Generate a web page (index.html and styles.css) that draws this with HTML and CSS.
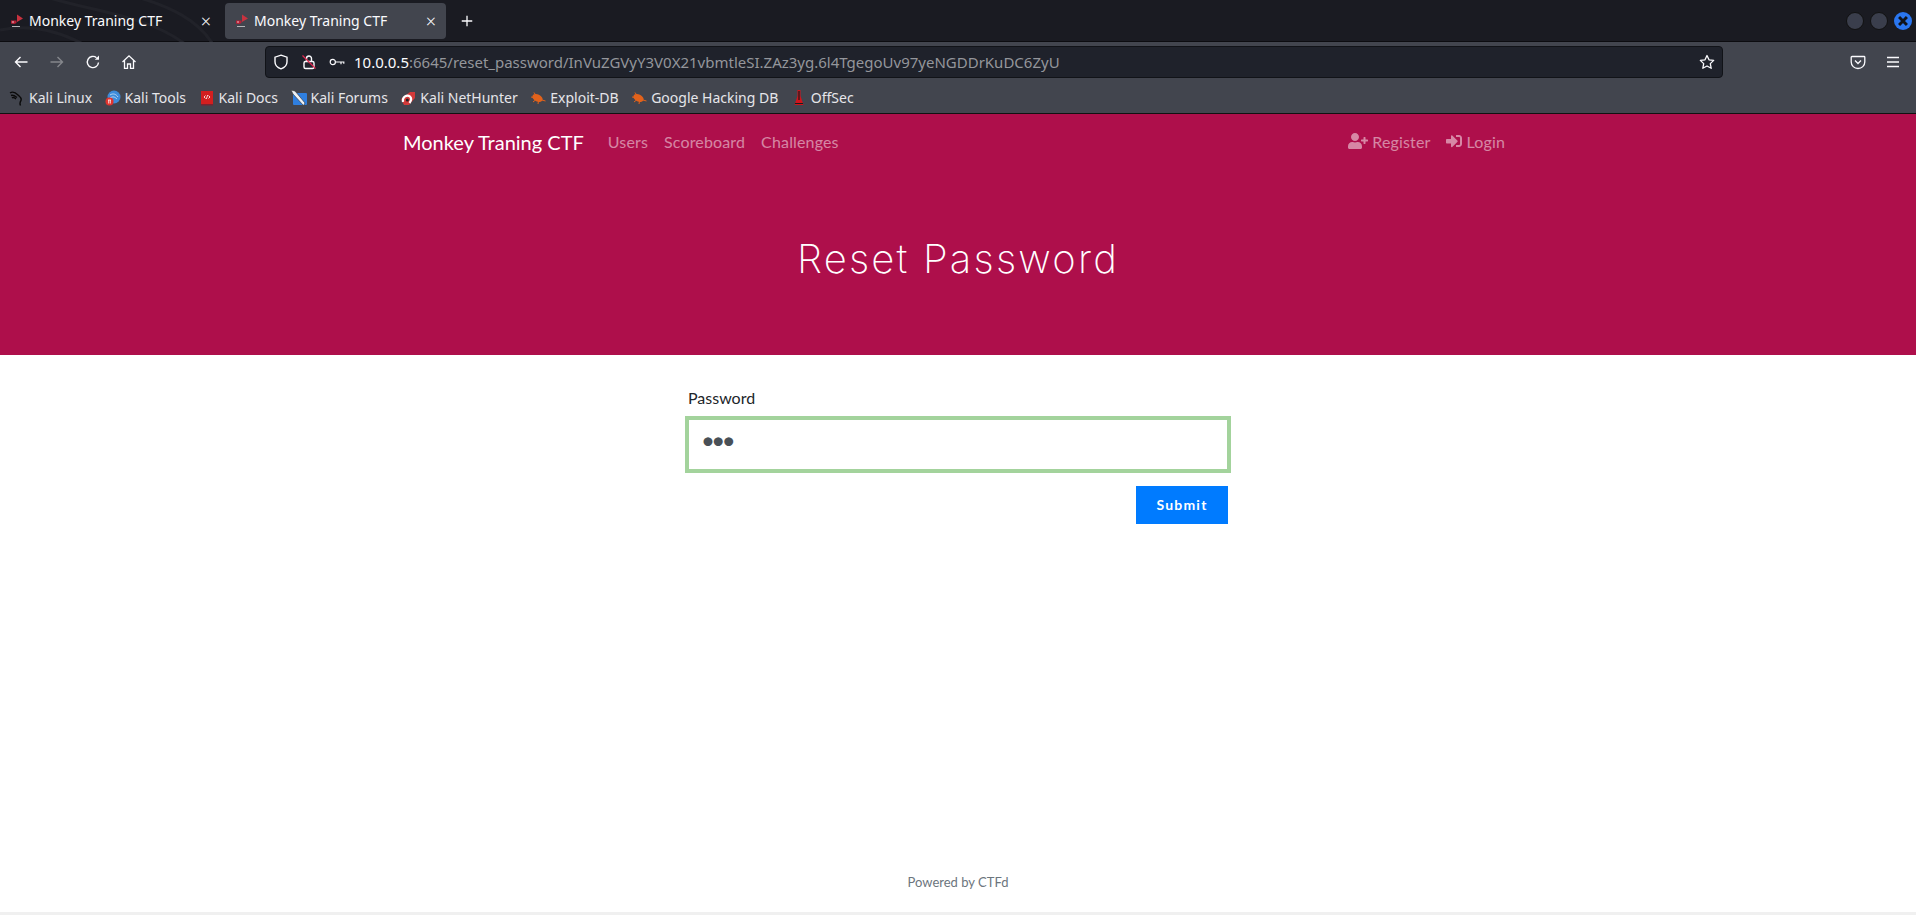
FILE: index.html
```html
<!DOCTYPE html>
<html lang="en">
<head>
    <meta charset="UTF-8">
    <title>Monkey Traning CTF</title>
    <link rel="stylesheet" href="styles.css">
</head>
<body>
    <div class="tabbar">
        <svg class="theme-marks" viewBox="0 0 700 42"><path d="M40 -5C90 12 150 14 190 48M130 -5C170 6 200 20 215 48M0 30C30 24 60 30 90 48" fill="none" stroke="#212229" stroke-width="3"/></svg>
        <div class="tab">
            <svg class="favicon" viewBox="0 0 16 16"><path d="M8 1.500l6 4-6 3.500z" fill="#c8323f"/><path d="M2 7.500h5.500v2.500q-2.500 1.500-5.500 .5z" fill="#b81f35"/><circle cx="4" cy="9" r=".7" fill="#fff"/><path d="M3 13.500h8" stroke="#b5b5b8" stroke-width="1"/></svg>
            <span class="tab-title">Monkey Traning CTF</span>
            <span class="tab-close">&#215;</span>
        </div>
        <div class="tab tab-active">
            <svg class="favicon" viewBox="0 0 16 16"><path d="M8 1.500l6 4-6 3.500z" fill="#c8323f"/><path d="M2 7.500h5.500v2.500q-2.500 1.500-5.500 .5z" fill="#b81f35"/><circle cx="4" cy="9" r=".7" fill="#fff"/><path d="M3 13.500h8" stroke="#b5b5b8" stroke-width="1"/></svg>
            <span class="tab-title">Monkey Traning CTF</span>
            <span class="tab-close">&#215;</span>
        </div>
        <svg class="newtab" viewBox="0 0 16 16"><path d="M8 2v12M2 8h12" stroke="#fbfbfe" stroke-width="1.500"/></svg>
        <div class="win-buttons">
            <span class="win-btn"></span>
            <span class="win-btn"></span>
            <span class="win-btn win-close"><svg viewBox="0 0 16 16"><path d="M4.500 4.500l7 7M11.500 4.500l-7 7" stroke="#10131a" stroke-width="2.600"/></svg></span>
        </div>
    </div>

    <div class="toolbar">
        <svg class="tool" viewBox="0 0 16 16"><path d="M14.500 8H2.500M7.500 3l-5 5 5 5" fill="none" stroke="#fbfbfe" stroke-width="1.400"/></svg>
        <svg class="tool" viewBox="0 0 16 16"><path d="M1.500 8h12M8.500 3l5 5-5 5" fill="none" stroke="#85878c" stroke-width="1.400"/></svg>
        <svg class="tool" viewBox="0 0 16 16"><path d="M13.500 8.500A5.600 5.600 0 1 1 11.500 3.700" fill="none" stroke="#fbfbfe" stroke-width="1.400"/><path d="M14 1.500v4.200H9.800z" fill="#fbfbfe"/></svg>
        <svg class="tool" viewBox="0 0 16 16"><path d="M1.500 8L8 1.800 14.500 8M3.500 6.500V14.300h3V10h3v4.300h3V6.500" fill="none" stroke="#fbfbfe" stroke-width="1.300"/></svg>
        <div class="urlbar">
            <svg class="url-icon" viewBox="0 0 16 16"><path d="M8 1.200l6 2v4.500c0 3.500-2.800 6-6 7.100-3.200-1.100-6-3.600-6-7.100V3.200z" fill="none" stroke="#fbfbfe" stroke-width="1.400"/></svg>
            <svg class="url-icon" viewBox="0 0 16 16"><rect x="3" y="7.500" width="10" height="7" rx="1.500" fill="none" stroke="#fbfbfe" stroke-width="1.400"/><path d="M5.500 7.500V4.500a2.500 2.500 0 0 1 5 0v3" fill="none" stroke="#fbfbfe" stroke-width="1.400"/><path d="M1.500 1.500l13 13" stroke="#e22850" stroke-width="1.300"/></svg>
            <svg class="url-icon url-key" viewBox="0 0 16 16"><circle cx="3.800" cy="8" r="2.600" fill="none" stroke="#fbfbfe" stroke-width="1.200"/><path d="M6.400 8h9M12 8v2.200M14.800 8v1.800" fill="none" stroke="#fbfbfe" stroke-width="1.200"/></svg>
            <span class="url-text"><span class="url-host">10.0.0.5</span>:6645/reset_password/InVuZGVyY3V0X21vbmtleSI.ZAz3yg.6l4TgegoUv97yeNGDDrKuDC6ZyU</span>
            <svg class="url-star" viewBox="0 0 16 16"><path d="M8 1.500l2 4.300 4.700.6-3.400 3.200.9 4.700L8 12l-4.200 2.300.9-4.700L1.300 6.400 6 5.800z" fill="none" stroke="#fbfbfe" stroke-width="1.300" stroke-linejoin="round"/></svg>
        </div>
        <svg class="tool tool-pocket" viewBox="0 0 16 16"><path d="M2 2.500h12a.8.8 0 0 1 .8.800V8a6.800 6.500 0 0 1-13.600 0V3.300A.8.8 0 0 1 2 2.500z" fill="none" stroke="#fbfbfe" stroke-width="1.300"/><path d="M5 6.500l3 3 3-3" fill="none" stroke="#fbfbfe" stroke-width="1.300"/></svg>
        <svg class="tool tool-menu" viewBox="0 0 16 16"><path d="M2 3.500h12M2 8h12M2 12.500h12" stroke="#fbfbfe" stroke-width="1.400"/></svg>
    </div>

    <div class="bookmarks">
        <span class="bm"><svg class="favicon" viewBox="0 0 16 16"><path d="M1 3C4 1 7 3 9 5c2 2 4 3 3 5.500-1 1.500-1.500 3-.5 5M2 5.500C4 4.500 6 6 8 7.500M3 8c1-1 3 0 4 1" fill="none" stroke="#0a0a0a" stroke-width="1.400"/></svg>Kali Linux</span>
        <span class="bm"><svg class="favicon" viewBox="0 0 16 16"><circle cx="9" cy="7" r="6.500" fill="#3d8bd9"/><path d="M5 5c3-2 6-1 8 2M5 8c3-2 5-1 7 1" fill="none" stroke="#cfe4f7" stroke-width=".8"/><circle cx="4.500" cy="11.500" r="4" fill="#e0342e"/><path d="M3 10h3M3.700 10v3.500M5.300 10v3.500" stroke="#fff" stroke-width=".8"/></svg>Kali Tools</span>
        <span class="bm"><svg class="favicon" viewBox="0 0 16 16"><rect x="2" y="1" width="12" height="13" fill="#d21f1f"/><rect x="2" y="14" width="12" height="1.500" fill="#7a2330"/><path d="M6.500 5.500L5 7l1.500 1.500M9.500 5.500L11 7 9.500 8.500M8.700 5l-1.400 4" fill="none" stroke="#fff" stroke-width=".8"/></svg>Kali Docs</span>
        <span class="bm"><svg class="favicon" viewBox="0 0 16 16"><rect x="2" y="3" width="14" height="12" rx="1" fill="#2f7fe0"/><path d="M0 0l4 1 10 12-1.500 2.500L2 4z" fill="#eef2f6" stroke="#2b2b2b" stroke-width=".6"/></svg>Kali Forums</span>
        <span class="bm"><svg class="favicon" viewBox="0 0 16 16"><path d="M1 9L10 2h5v6l-6 7H4z" fill="#d23a3a"/><path d="M3 12C2 7 7 4 10 6.500 12 8.500 11 11 9.500 13" fill="none" stroke="#fff" stroke-width="2.200"/><circle cx="7.300" cy="10" r="1.500" fill="#222"/></svg>Kali NetHunter</span>
        <span class="bm"><svg class="favicon" viewBox="0 0 16 16"><ellipse cx="7.500" cy="8" rx="5.500" ry="3.500" transform="rotate(25 7.500 8)" fill="#e2621b"/><path d="M12 10l3.500 1M4 2.500l2 3M1 7l3 .5M3 12l2.500-2M8 14l.5-3" stroke="#e2621b" stroke-width="1"/></svg>Exploit-DB</span>
        <span class="bm"><svg class="favicon" viewBox="0 0 16 16"><ellipse cx="7.500" cy="8" rx="5.500" ry="3.500" transform="rotate(25 7.500 8)" fill="#e2621b"/><path d="M12 10l3.500 1M4 2.500l2 3M1 7l3 .5M3 12l2.500-2M8 14l.5-3" stroke="#e2621b" stroke-width="1"/></svg>Google Hacking DB</span>
        <span class="bm"><svg class="favicon" viewBox="0 0 16 16"><path d="M6.500 0h3v6l3 9h-9l3-9z" fill="#d0141c"/><path d="M8 1v9M4 13.500h8" stroke="#1c1c1c" stroke-width="1.200"/></svg>OffSec</span>
    </div>

    <div class="page">
        <header class="hero">
            <nav class="navbar">
                <a class="brand">Monkey Traning CTF</a>
                <a class="nav-link">Users</a>
                <a class="nav-link">Scoreboard</a>
                <a class="nav-link">Challenges</a>
                <a class="nav-link nav-right"><svg class="nav-icon nav-icon-wide" viewBox="0 0 640 512"><path d="M624 208h-64v-64c0-8.800-7.200-16-16-16h-32c-8.800 0-16 7.200-16 16v64h-64c-8.800 0-16 7.200-16 16v32c0 8.800 7.200 16 16 16h64v64c0 8.800 7.200 16 16 16h32c8.800 0 16-7.200 16-16v-64h64c8.800 0 16-7.200 16-16v-32c0-8.800-7.200-16-16-16zm-400 48c70.700 0 128-57.300 128-128S294.700 0 224 0 96 57.300 96 128s57.300 128 128 128zm89.600 32h-16.700c-22.200 10.200-46.900 16-72.900 16s-50.600-5.800-72.900-16h-16.700C60.200 288 0 348.200 0 422.400V464c0 26.500 21.500 48 48 48h352c26.500 0 48-21.500 48-48v-41.600c0-74.200-60.200-134.400-134.400-134.400z"/></svg>Register</a>
                <a class="nav-link"><svg class="nav-icon" viewBox="0 0 512 512"><path d="M416 448h-84c-6.600 0-12-5.400-12-12v-40c0-6.600 5.400-12 12-12h84c17.700 0 32-14.300 32-32V160c0-17.700-14.300-32-32-32h-84c-6.600 0-12-5.400-12-12V76c0-6.600 5.400-12 12-12h84c53 0 96 43 96 96v192c0 53-43 96-96 96zm-47-201L201 79c-15-15-41-4.500-41 17v96H24c-13.300 0-24 10.700-24 24v96c0 13.300 10.700 24 24 24h136v96c0 21.500 26 32 41 17l168-168c9.300-9.400 9.300-24.600 0-34z"/></svg>Login</a>
            </nav>
            <h1 class="hero-title">Reset Password</h1>
        </header>

        <main class="content">
            <form class="reset-form">
                <label class="field-label" for="password">Password</label>
                <input class="field-input" id="password" type="password" value="abc">
                <div class="form-actions">
                    <button class="submit-btn" type="button">Submit</button>
                </div>
            </form>
        </main>

        <footer class="footer">Powered by CTFd</footer>
    </div>
</body>
</html>
```

FILE: styles.css
```css
* {
    box-sizing: border-box;
}
body {
    margin: 0;
    height: 915px;
    overflow: hidden;
    display: flex;
    flex-direction: column;
    background-color: #fff;
    font-family: 'Lato', sans-serif;
}
svg {
    display: block;
    flex: none;
}

/* browser chrome */
.tabbar {
    position: relative;
    height: 42px;
    display: flex;
    align-items: center;
    background-color: #1a1b22;
    border-bottom: 1px solid #0c0c10;
    font-family: 'Noto Sans', sans-serif;
    font-size: 14px;
    color: #fbfbfe;
}
.theme-marks {
    position: absolute;
    top: 0;
    left: 0;
    width: 700px;
    height: 42px;
}
.tab {
    position: relative;
    width: 221px;
    height: 36px;
    margin-right: 4px;
    padding: 0 10px 0 9px;
    display: flex;
    align-items: center;
    border-radius: 4px;
}
.tab-active {
    background-color: #42454e;
}
.tab-title {
    margin-left: 4px;
    flex: 1;
}
.tab-close {
    font-size: 18px;
    font-weight: 300;
    line-height: 1;
}
.favicon {
    width: 16px;
    height: 16px;
}
.newtab {
    position: relative;
    width: 14px;
    height: 14px;
    margin-left: 10px;
}
.win-buttons {
    margin-left: auto;
    margin-right: 4px;
    display: flex;
    gap: 6px;
}
.win-btn {
    width: 18px;
    height: 18px;
    border-radius: 50%;
    background-color: #3a3e4c;
    border: 1px solid #111;
}
.win-close {
    background-color: #2a76f0;
    border: 0;
}
.toolbar {
    height: 40px;
    display: flex;
    align-items: center;
    background-color: #42454e;
}
.tool {
    width: 16px;
    height: 16px;
    margin-left: 13px;
    margin-right: 7px;
}
.urlbar {
    width: 1458px;
    height: 32px;
    margin-left: 121px;
    margin-right: 127px;
    padding: 0 7px;
    display: flex;
    align-items: center;
    background-color: #1f222b;
    border: 1px solid #111318;
    border-radius: 4px;
    font-family: 'Noto Sans', sans-serif;
    font-size: 15px;
    color: #94969b;
}
.url-icon {
    width: 16px;
    height: 16px;
    margin-right: 12px;
}
.url-key {
    margin-right: 9px;
}
.url-host {
    color: #fbfbfe;
}
.url-star {
    width: 16px;
    height: 16px;
    margin-left: auto;
}
.tool-pocket {
    margin-left: 0;
    margin-right: 0;
}
.tool-menu {
    margin-left: 19px;
    margin-right: 0;
}
.bookmarks {
    height: 32px;
    padding-left: 9px;
    display: flex;
    align-items: center;
    gap: 12.500px;
    background-color: #42454e;
    border-bottom: 1px solid #111;
    font-family: 'Noto Sans', sans-serif;
    font-size: 14px;
    color: #e6e6ea;
}
.bm {
    display: flex;
    align-items: center;
    gap: 4px;
}

/* ctfd page */
.page {
    flex: 1;
    display: flex;
    flex-direction: column;
    border-bottom: 3px solid #f0f0f0;
}
.hero {
    height: 241px;
    background-color: #ae0f4b;
}
.navbar {
    width: 1140px;
    margin: 0 auto;
    padding: 0 15px;
    height: 56px;
    display: flex;
    align-items: center;
    font-size: 16px;
}
.brand {
    font-size: 20px;
    color: #fff;
    margin-right: 16px;
}
.nav-link {
    padding: 0 8px 2px;
    letter-spacing: .15px;
    color: rgba(255, 255, 255, 0.5);
    display: flex;
    align-items: center;
}
.nav-right {
    margin-left: auto;
}
.nav-icon {
    height: 16px;
    width: 16px;
    margin-right: 4px;
    fill: rgba(255, 255, 255, 0.5);
}
.nav-icon-wide {
    width: 20px;
}
.hero-title {
    margin: 64px 0 0;
    text-align: center;
    font-family: 'Inter', sans-serif;
    font-size: 40px;
    font-weight: 200;
    letter-spacing: 2.200px;
    color: #fff;
}
.content {
    flex: 1;
    padding-top: 31px;
}
.reset-form {
    width: 540px;
    margin: 0 auto;
}
.field-label {
    display: block;
    font-size: 16px;
    line-height: 24px;
    margin-bottom: 9px;
    color: #212529;
}
.field-input {
    display: block;
    width: 100%;
    height: 51px;
    padding: 0 12px 10px;
    border: 1px solid #a3d39c;
    outline: 0;
    box-shadow: 0 0 0 3px #a3d39c;
    font-family: 'Lato', sans-serif;
    font-size: 24px;
    letter-spacing: -3.600px;
    color: #495057;
}
.form-actions {
    display: flex;
    justify-content: flex-end;
    margin-top: 16px;
}
.submit-btn {
    width: 92px;
    height: 38px;
    padding: 0 0 2px;
    border: 0;
    background-color: #007bff;
    color: #fff;
    font-family: 'Lato', sans-serif;
    font-size: 14px;
    font-weight: 700;
    letter-spacing: 1.200px;
}
.footer {
    height: 38px;
    text-align: center;
    font-size: 13px;
    color: #6c757d;
}
```
